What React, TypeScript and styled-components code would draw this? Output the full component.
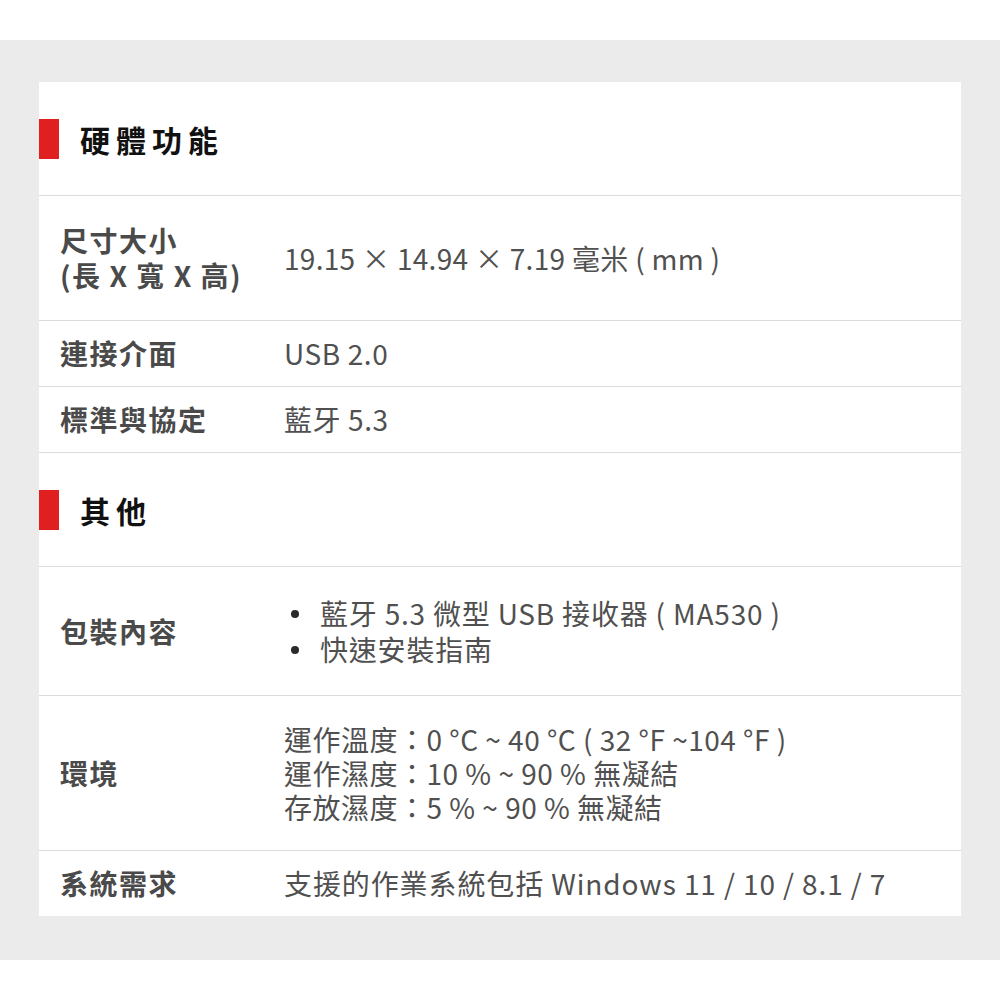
import React from 'react';
import styled, { createGlobalStyle } from 'styled-components';

const GlobalStyle = createGlobalStyle`
  html, body {
    margin: 0;
    padding: 0;
    background: #ffffff;
    font-family: "Noto Sans CJK TC", "Noto Sans", sans-serif;
  }
`;

const Page = styled.div`
  padding-top: 40px;
  padding-bottom: 40px;
`;

const Backdrop = styled.div`
  background: #ebebeb;
  padding: 42px 39px 44px;
`;

const Panel = styled.div`
  background: #ffffff;
  display: flex;
  flex-direction: column;
`;

const SectionHead = styled.div`
  display: flex;
  align-items: center;
  gap: 21px;
  padding: 37px 0 36px;
  border-bottom: 1px solid #dcdcdc;
`;

const RedBar = styled.span`
  width: 20px;
  height: 40px;
  background: #e02020;
  flex-shrink: 0;
`;

const SectionTitle = styled.h2`
  margin: 0;
  font-size: 30px;
  line-height: 40px;
  font-weight: 700;
  letter-spacing: 6px;
  color: #111111;
`;

const Row = styled.div<{ $pad: number; $last?: boolean }>`
  display: grid;
  grid-template-columns: 224px 1fr;
  align-items: center;
  padding: ${(p) => p.$pad}px 0 ${(p) => p.$pad}px 21px;
  border-bottom: ${(p) => (p.$last ? 'none' : '1px solid #dcdcdc')};
`;

const Label = styled.div`
  font-size: 28px;
  line-height: 35px;
  font-weight: 700;
  letter-spacing: 1.5px;
  color: #4a4a4a;
`;

const Value = styled.div<{ $lh?: number; $ls?: number }>`
  font-size: 28px;
  line-height: ${(p) => p.$lh ?? 35}px;
  font-weight: 400;
  letter-spacing: ${(p) => p.$ls ?? 0.6}px;
  color: #505050;
`;

const List = styled.ul`
  margin: 0;
  padding: 0;
  list-style: none;
`;

const Item = styled.li`
  position: relative;
  padding-left: 36px;
  font-size: 28px;
  line-height: 36px;
  color: #505050;
  letter-spacing: 0.8px;

  &::before {
    content: '';
    position: absolute;
    left: 7px;
    top: 15px;
    width: 8px;
    height: 8px;
    border-radius: 50%;
    background: #2a2a2a;
  }
`;

const Section: React.FC<{ title: string }> = ({ title }) => (
  <SectionHead>
    <RedBar />
    <SectionTitle>{title}</SectionTitle>
  </SectionHead>
);

const App: React.FC = () => {
  return (
    <Page>
      <GlobalStyle />
      <Backdrop>
        <Panel>
          <Section title="硬體功能" />
          <Row $pad={27}>
            <Label>
              尺寸大小
              <br />
              (長 X 寬 X 高)
            </Label>
            <Value $ls={0.3}>19.15 × 14.94 × 7.19 毫米 ( mm )</Value>
          </Row>
          <Row $pad={15}>
            <Label>連接介面</Label>
            <Value>USB 2.0</Value>
          </Row>
          <Row $pad={15}>
            <Label>標準與協定</Label>
            <Value>藍牙 5.3</Value>
          </Row>
          <Section title="其他" />
          <Row $pad={28}>
            <Label>包裝內容</Label>
            <List>
              <Item>藍牙 5.3 微型 USB 接收器 ( MA530 )</Item>
              <Item>快速安裝指南</Item>
            </List>
          </Row>
          <Row $pad={26}>
            <Label>環境</Label>
            <Value $lh={34} $ls={0.5}>
              運作溫度：0 °C ~ 40 °C ( 32 °F ~104 °F )
              <br />
              運作濕度：10 % ~ 90 % 無凝結
              <br />
              存放濕度：5 % ~ 90 % 無凝結
            </Value>
          </Row>
          <Row $pad={15} $last>
            <Label>系統需求</Label>
            <Value $ls={0.9}>支援的作業系統包括 Windows 11 / 10 / 8.1 / 7</Value>
          </Row>
        </Panel>
      </Backdrop>
    </Page>
  );
};

export default App;
